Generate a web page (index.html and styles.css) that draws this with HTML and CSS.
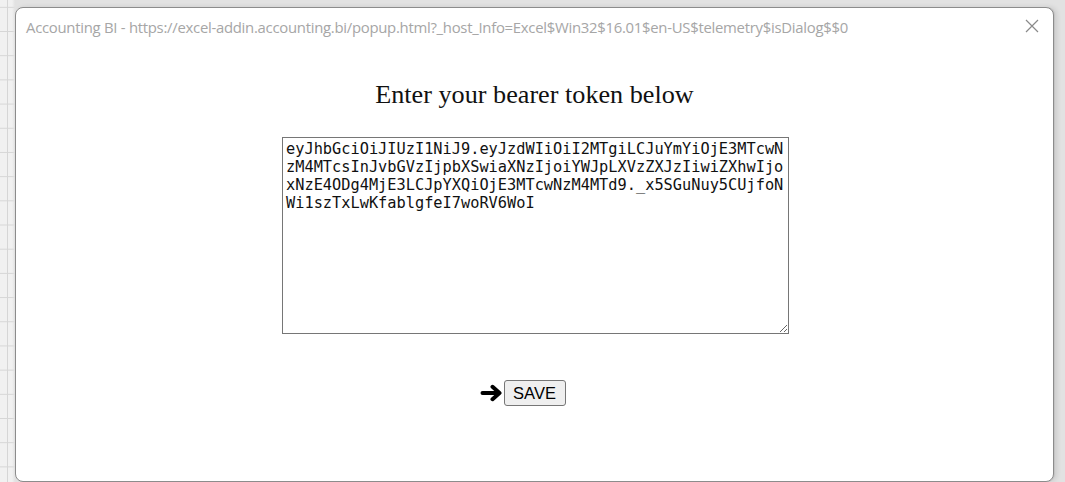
FILE: index.html
```html
<!DOCTYPE html>
<html>
<head>
<meta charset="utf-8">
<link rel="stylesheet" href="styles.css">
</head>
<body>
<div class="dialog">
  <div class="titlebar">
    <span class="title">Accounting BI - https://excel-addin.accounting.bi/popup.html?_host_Info=Excel$Win32$16.01$en-US$telemetry$isDialog$$0</span>
    <svg class="close" width="14" height="14" viewBox="0 0 14 14"><path d="M1 1 L13 13 M13 1 L1 13" stroke="#8a8a8a" stroke-width="1.2" fill="none"/></svg>
  </div>
  <div class="content">
    <h1 class="heading">Enter your bearer token below</h1>
    <textarea class="token" spellcheck="false">eyJhbGciOiJIUzI1NiJ9.eyJzdWIiOiI2MTgiLCJuYmYiOjE3MTcwNzM4MTcsInJvbGVzIjpbXSwiaXNzIjoiYWJpLXVzZXJzIiwiZXhwIjoxNzE4ODg4MjE3LCJpYXQiOjE3MTcwNzM4MTd9._x5SGuNuy5CUjfoNWi1szTxLwKfablgfeI7woRV6WoI</textarea>
    <div class="actions">
      <svg class="arrow" width="23" height="18" viewBox="0 0 23 18"><path d="M2.5 9 H19 M12.5 2.8 L19.5 9 L12.5 15.2" stroke="#000" stroke-width="4" stroke-linecap="round" stroke-linejoin="round" fill="none"/></svg><button class="save">SAVE</button>
    </div>
  </div>
</div>
</body>
</html>
```
FILE: styles.css
```css
html, body {
  margin: 0;
  height: 100%;
}
body {
  box-sizing: border-box;
  padding: 7px 11px 0 15px;
  background-color: #f1f1f1;
  background-image:
    linear-gradient(to right, transparent 7px, #d6d6d6 7px, #d6d6d6 8px, transparent 8px, transparent 12px, #e2e2e2 15px),
    linear-gradient(to bottom, transparent 23px, #d6d6d6 23px, #d6d6d6 24px);
  background-size: 100% 100%, 100% 24.2px;
  background-position: 0 0, 0 7.8px;
  display: flex;
  overflow: hidden;
}
.dialog {
  flex: 1;
  background: #fff;
  border: 1px solid #8c8c8c;
  border-radius: 8px;
  box-shadow: 1px 0 0 #c4c4c4, 3px 0 5px rgba(0,0,0,0.1);
  display: flex;
  flex-direction: column;
  min-height: 0;
}
.titlebar {
  display: flex;
  align-items: center;
  justify-content: space-between;
  padding: 7px 14px 0 10px;
  height: 24px;
}
.title {
  font-family: "Open Sans", "Noto Sans", sans-serif;
  font-size: 14.9px;
  color: #a6a6a6;
  letter-spacing: -0.28px;
  white-space: nowrap;
}
.close {
  display: block;
  margin-top: -3px;
}
.content {
  display: flex;
  flex-direction: column;
  align-items: center;
}
.heading {
  margin: 41px 0 0;
  font-family: "Liberation Serif", serif;
  font-weight: normal;
  font-size: 26.2px;
  line-height: 30px;
  color: #111;
}
.token {
  margin-top: 27px;
  margin-left: 2px;
  width: 507px;
  height: 197px;
  box-sizing: border-box;
  border: 1px solid #767676;
  padding: 2px 3px 0;
  font-family: "DejaVu Sans Mono", "Liberation Mono", monospace;
  font-size: 15.3px;
  line-height: 18px;
  color: #111;
  resize: both;
  word-break: break-all;
  outline: none;
  overflow: hidden;
}
.actions {
  display: flex;
  align-items: center;
  margin-top: 46px;
  margin-right: 24px;
}
.arrow {
  display: block;
  margin-right: 1px;
}
.save {
  font-family: "Liberation Sans", Arial, sans-serif;
  font-size: 16.5px;
  padding: 1px 7px;
  height: 26px;
  width: 62px;
  background: #efefef;
  border: 1px solid #767676;
  border-radius: 3px;
  color: #000;
}
```
